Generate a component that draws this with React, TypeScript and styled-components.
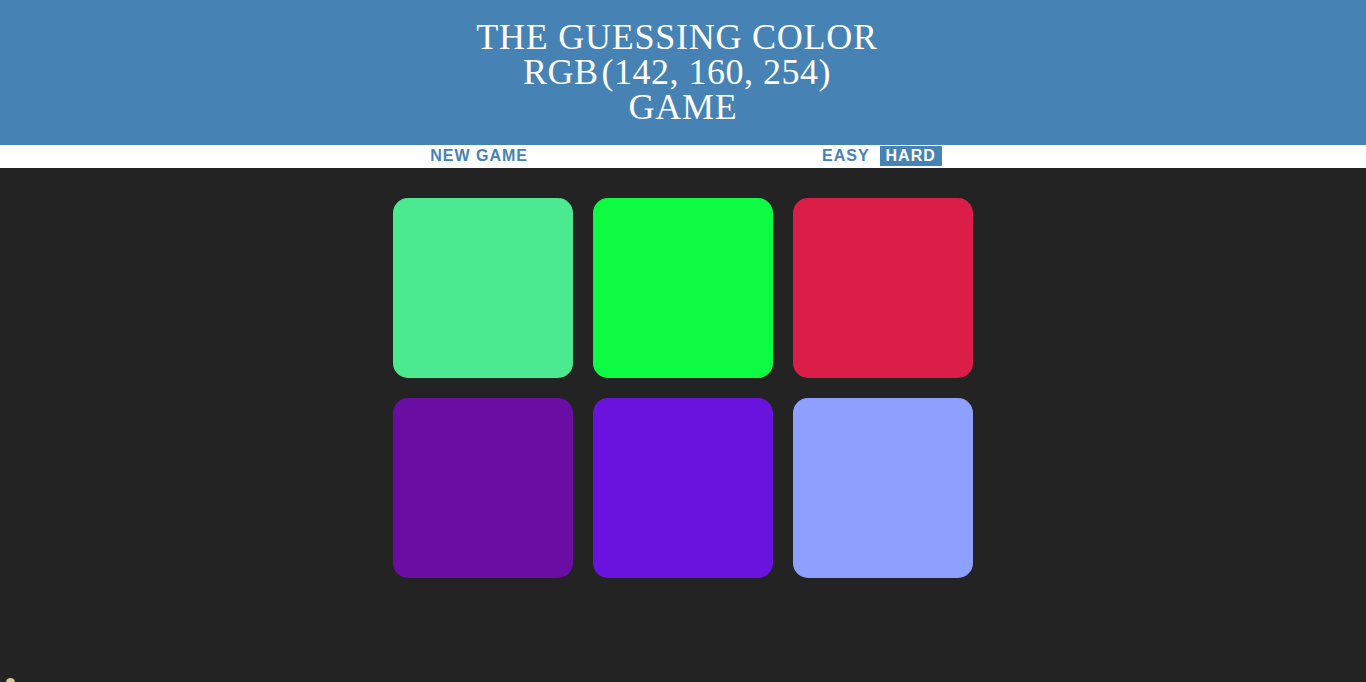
import React from "react";
import styled, { createGlobalStyle } from "styled-components";

const Global = createGlobalStyle`
  html, body { margin: 0; padding: 0; }
  body { background: #232323; font-family: "Liberation Sans", Arial, sans-serif; overflow: hidden; }
`;

const Page = styled.div`
  position: relative;
  height: 682px;
`;

const Header = styled.h1`
  margin: 0;
  height: 145px;
  box-sizing: border-box;
  padding: 20px 0 0;
  background: #4682b4;
  color: #fff;
  text-align: center;
  font-family: "Liberation Serif", "Times New Roman", serif;
  font-weight: normal;
  font-size: 36px;
  line-height: 35px;
  letter-spacing: 0.75px;
  text-transform: uppercase;
`;

const Line = styled.span<{ $shift?: number; $spacing?: number }>`
  display: block;
  padding-right: ${(p) => (p.$shift ?? 0) * 2}px;
  ${(p) => (p.$spacing !== undefined ? `letter-spacing: ${p.$spacing}px;` : "")}
`;

const Rgb = styled.span`
  margin-left: 3px;
`;

const Stripe = styled.div`
  height: 23px;
  background: #fff;
  display: flex;
  justify-content: center;
  align-items: flex-start;
  padding-top: 1px;
  box-sizing: border-box;
`;

const Button = styled.button<{ $active?: boolean }>`
  border: none;
  margin: 0;
  height: 20px;
  padding: 0 6px;
  background: ${(p) => (p.$active ? "#4682b4" : "transparent")};
  color: ${(p) => (p.$active ? "#fff" : "#4682b4")};
  font-family: "Liberation Sans", Arial, sans-serif;
  font-weight: bold;
  font-size: 16px;
  letter-spacing: 1px;
  text-transform: uppercase;
  line-height: 20px;
  cursor: pointer;
`;

const Message = styled.span`
  display: inline-block;
  width: 282px;
`;

const Gap = styled.span`
  display: inline-block;
  width: 4px;
`;

const Grid = styled.div`
  width: 580px;
  margin: 30px auto 0;
  display: grid;
  grid-template-columns: repeat(3, 180px);
  gap: 20px;
`;

const Square = styled.div<{ $color: string }>`
  width: 180px;
  height: 180px;
  border-radius: 15px;
  background: ${(p) => p.$color};
`;

const Dot = styled.div`
  position: absolute;
  left: 6px;
  top: 678px;
  width: 9px;
  height: 9px;
  border-radius: 50%;
  background: #d9c98a;
`;

const colors = [
  "rgb(75, 234, 145)",
  "rgb(14, 251, 67)",
  "rgb(218, 30, 72)",
  "rgb(106, 13, 162)",
  "rgb(106, 18, 222)",
  "rgb(142, 160, 254)",
];

export default function App() {
  return (
    <Page>
      <Global />
      <Header>
        <Line $shift={6}>The Guessing Color</Line>
        <Line $shift={6} $spacing={0.5}>
          RGB<Rgb>(142, 160, 254)</Rgb>
        </Line>
        <Line>Game</Line>
      </Header>
      <Stripe>
        <Button>New Game</Button>
        <Message />
        <Button>Easy</Button>
        <Gap />
        <Button $active>Hard</Button>
      </Stripe>
      <Grid>
        {colors.map((c, i) => (
          <Square key={i} $color={c} />
        ))}
      </Grid>
      <Dot />
    </Page>
  );
}
